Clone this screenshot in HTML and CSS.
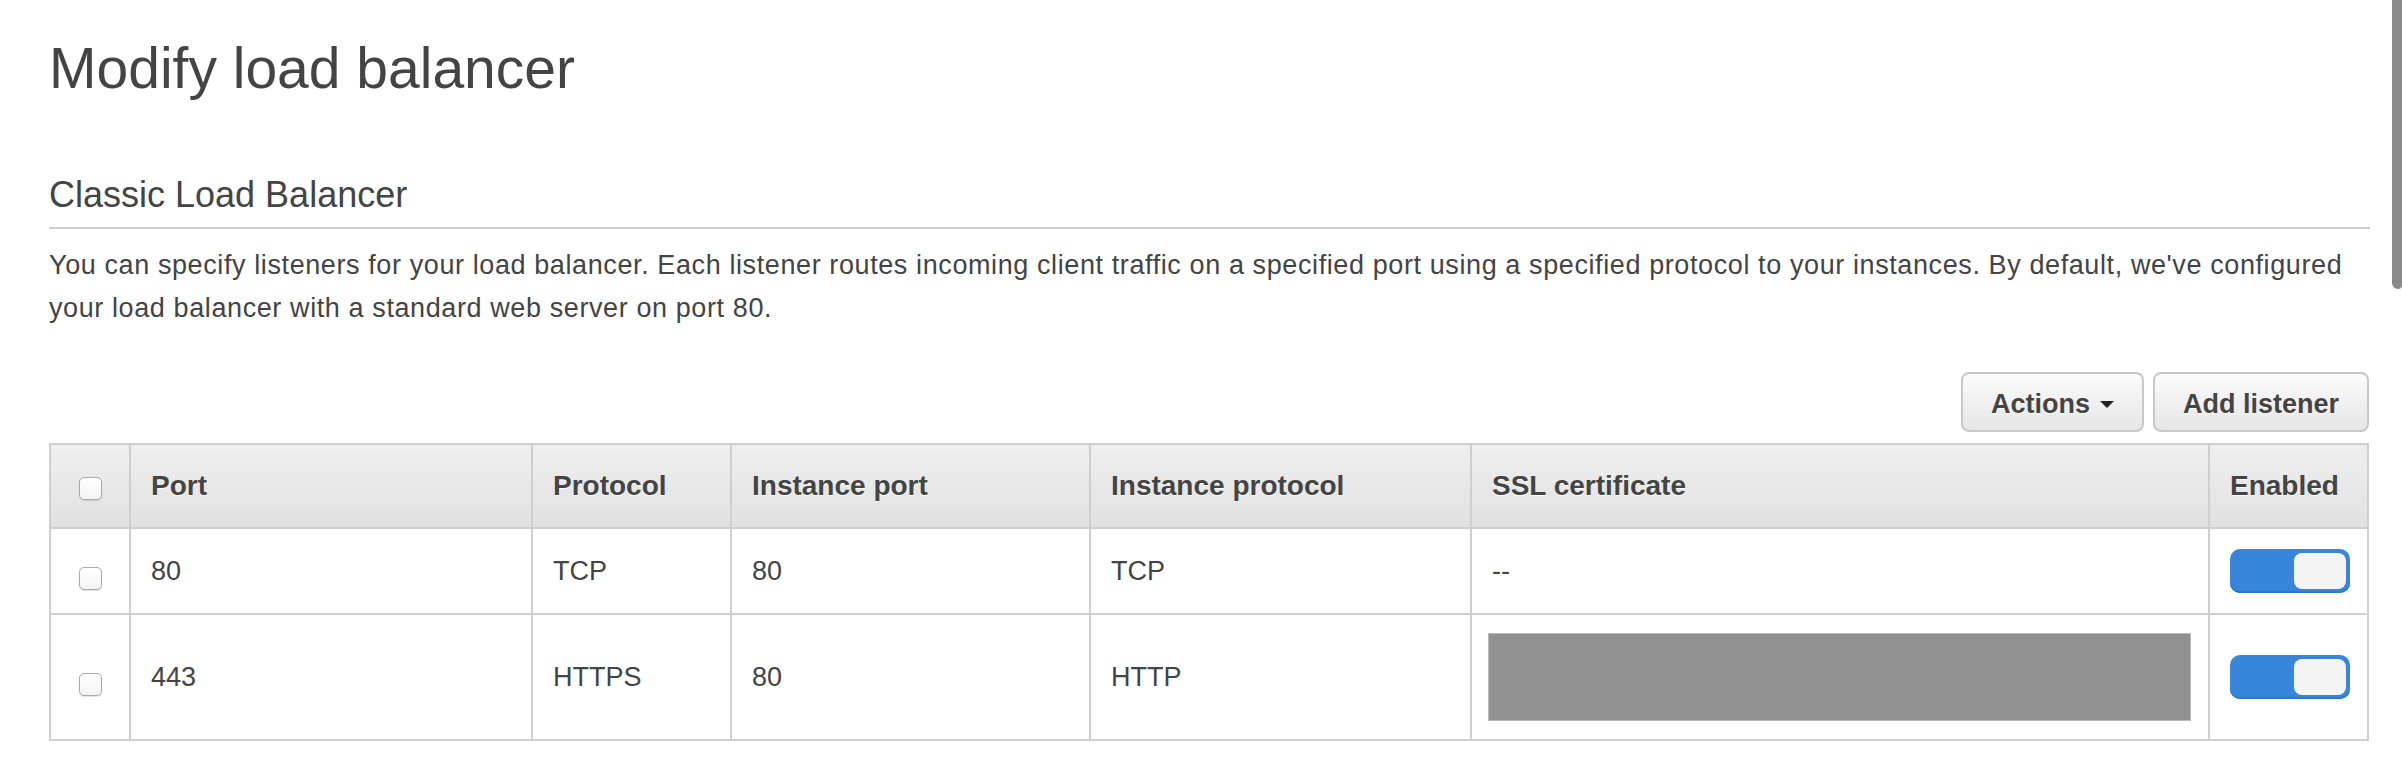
FILE: index.html
```
<!DOCTYPE html>
<html lang="en">
<head>
<meta charset="utf-8">
<title>Modify load balancer</title>
<link rel="stylesheet" href="styles.css">
</head>
<body>
<div class="page">
  <h1 class="title">Modify load balancer</h1>
  <h2 class="section-title">Classic Load Balancer</h2>
  <p class="intro">You can specify listeners for your load balancer. Each listener routes incoming client traffic on a specified port using a specified protocol to your instances. By default, we've configured your load balancer with a standard web server on port 80.</p>
  <div class="toolbar">
    <button class="btn" type="button">Actions <span class="caret"></span></button>
    <button class="btn" type="button">Add listener</button>
  </div>
  <table class="listeners">
    <thead>
      <tr class="head-row">
        <th class="col-check"><span class="checkbox checkbox-head"></span></th>
        <th class="col-port">Port</th>
        <th class="col-proto">Protocol</th>
        <th class="col-iport">Instance port</th>
        <th class="col-iproto">Instance protocol</th>
        <th class="col-ssl">SSL certificate</th>
        <th class="col-enabled">Enabled</th>
      </tr>
    </thead>
    <tbody>
      <tr class="row-1">
        <td><span class="checkbox checkbox-row"></span></td>
        <td>80</td>
        <td>TCP</td>
        <td>80</td>
        <td>TCP</td>
        <td>--</td>
        <td><span class="toggle"><span class="knob"></span></span></td>
      </tr>
      <tr class="row-2">
        <td><span class="checkbox checkbox-row"></span></td>
        <td>443</td>
        <td>HTTPS</td>
        <td>80</td>
        <td>HTTP</td>
        <td><div class="redacted"></div></td>
        <td><span class="toggle"><span class="knob"></span></span></td>
      </tr>
    </tbody>
  </table>
</div>
<div class="scroll-thumb"></div>
</body>
</html>
```
FILE: styles.css
```
html, body {
  margin: 0;
  padding: 0;
  background: #ffffff;
}

body {
  font-family: "Liberation Sans", Arial, Helvetica, sans-serif;
  color: #444444;
  width: 2402px;
  height: 784px;
  overflow: hidden;
}

.page {
  width: 2320px;
  padding-left: 49px;
}

.title {
  margin: 40px 0 0 0;
  font-size: 57px;
  line-height: 57px;
  font-weight: normal;
  color: #444444;
}

.section-title {
  margin: 80px -1px 0 0;
  padding-bottom: 14px;
  font-size: 36px;
  line-height: 36px;
  font-weight: normal;
  color: #444444;
  border-bottom: 2px solid #cccccc;
}

.intro {
  margin: 15px 0 0 0;
  font-size: 27px;
  letter-spacing: 0.6px;
  line-height: 43px;
  color: #444444;
}

.toolbar {
  display: flex;
  justify-content: flex-end;
  gap: 9px;
  margin-top: 42px;
}

.btn {
  display: flex;
  align-items: center;
  gap: 10px;
  box-sizing: border-box;
  height: 60px;
  padding: 4px 28px 0 28px;
  font-family: "Liberation Sans", Arial, Helvetica, sans-serif;
  font-size: 27px;
  font-weight: bold;
  color: #444444;
  text-shadow: 0 1px 0 #ffffff;
  background: linear-gradient(#fbfbfb, #e6e6e6);
  border: 2px solid #c8c8c8;
  border-radius: 8px;
}

.caret {
  width: 0;
  height: 0;
  border-left: 7px solid transparent;
  border-right: 7px solid transparent;
  border-top: 7px solid #222222;
}

.listeners {
  margin-top: 11px;
  width: 2320px;
  table-layout: fixed;
  border-collapse: separate;
  border-spacing: 0;
  border-top: 2px solid #cfcfcf;
  border-left: 2px solid #cfcfcf;
}

.listeners th,
.listeners td {
  box-sizing: border-box;
  padding: 0 20px;
  text-align: left;
  vertical-align: middle;
  border-right: 2px solid #cfcfcf;
  border-bottom: 2px solid #cfcfcf;
}

.listeners th {
  font-size: 28px;
  font-weight: bold;
  color: #444444;
  text-shadow: 0 1px 0 #ffffff;
  background: linear-gradient(#efefef, #e1e1e1);
}

.listeners td {
  font-size: 27px;
  color: #444444;
}

.head-row { height: 84px; }
.row-1 { height: 86px; }

.col-check { width: 80px; }
.col-port { width: 402px; }
.col-proto { width: 199px; }
.col-iport { width: 359px; }
.col-iproto { width: 381px; }
.col-ssl { width: 738px; }
.col-enabled { width: 159px; }

.listeners .col-check,
.listeners td:first-child {
  padding: 0;
}

.checkbox {
  display: block;
  box-sizing: border-box;
  width: 23px;
  height: 23px;
  margin-left: auto;
  margin-right: auto;
  border: 1px solid #a9a9a9;
  border-radius: 5px;
  background: linear-gradient(#ffffff, #f4f4f4);
  box-shadow: 0 1px 1px rgba(0, 0, 0, 0.12);
}

.checkbox-head {
  margin-top: 4px;
}

.checkbox-row {
  margin-top: 14px;
}

.redacted {
  box-sizing: border-box;
  width: 703px;
  height: 88px;
  margin: 18px 0 18px -4px;
  background: #919191;
  border: 1px solid #b9b9b9;
}

.toggle {
  display: flex;
  justify-content: flex-end;
  align-items: center;
  box-sizing: border-box;
  width: 120px;
  height: 44px;
  padding-right: 4px;
  background: #3886db;
  border-radius: 10px;
  box-shadow: inset 0 -2px 0 #2d79cd;
}

.knob {
  width: 52px;
  height: 36px;
  border-radius: 8px;
  background: #f4f4f4;
}

.scroll-thumb {
  position: fixed;
  top: 0;
  right: 0;
  width: 10px;
  height: 289px;
  background: #8a8a8a;
  border-radius: 0 0 4px 6px;
}
```
